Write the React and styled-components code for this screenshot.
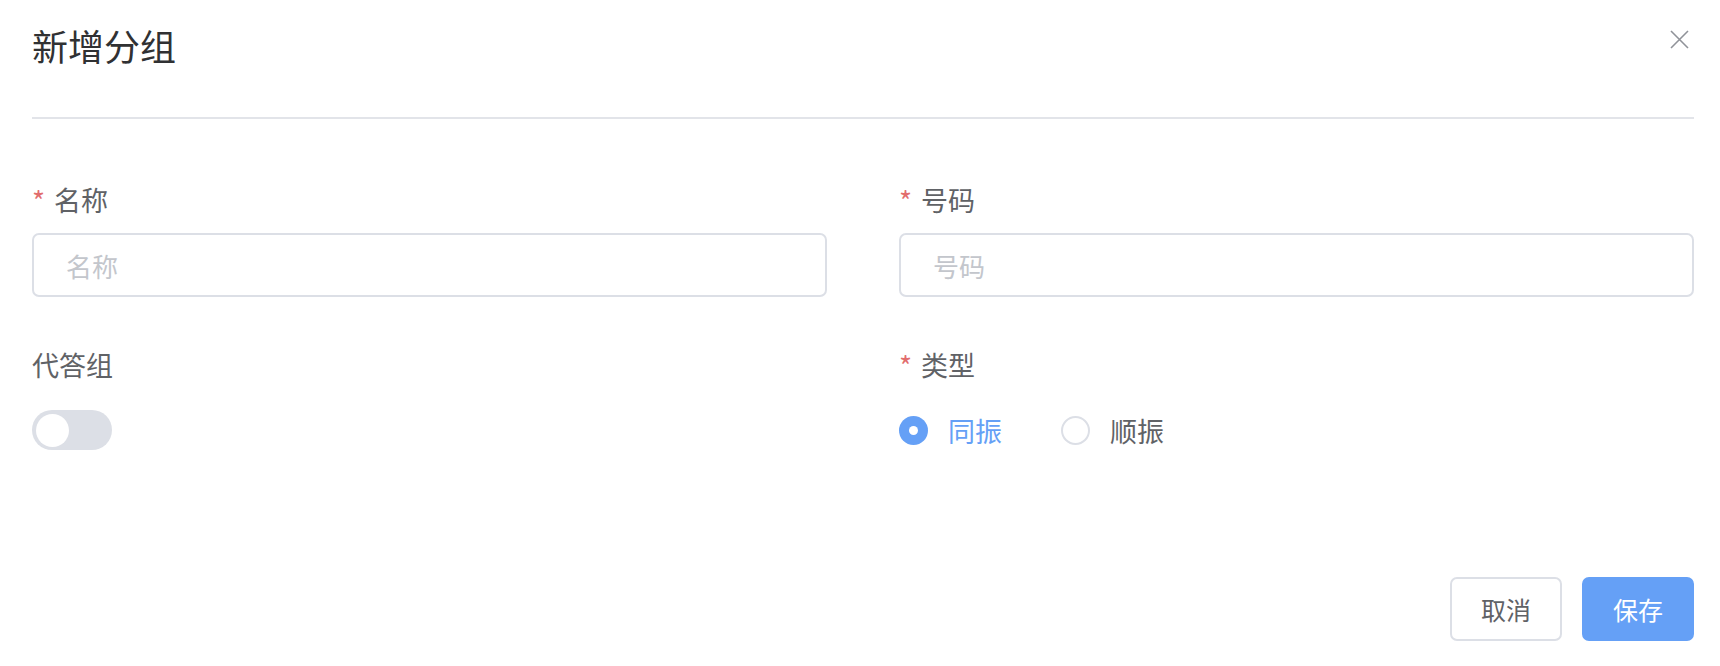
import React, { useState } from "react";
import styled, { createGlobalStyle } from "styled-components";

const GlobalStyle = createGlobalStyle`
    html, body {
        margin: 0;
        padding: 0;
        background: #ffffff;
    }
    body {
        font-family: "Noto Sans CJK SC", "Noto Sans", sans-serif;
        color: #606266;
    }
`;

const Dialog = styled.div`
    width: 1720px;
    height: 666px;
    box-sizing: border-box;
    padding: 0 26px 0 32px;
    background: #ffffff;
    display: flex;
    flex-direction: column;
`;

const Header = styled.div`
    height: 119px;
    box-sizing: border-box;
    border-bottom: 2px solid #e2e4e9;
    display: flex;
    justify-content: space-between;
    align-items: flex-start;
`;

const Titulo = styled.h1`
    margin: 25px 0 0 0;
    font-size: 36px;
    line-height: 40px;
    font-weight: 400;
    color: #303133;
`;

const Fechar = styled.button`
    margin: 29px 5px 0 0;
    padding: 0;
    width: 20px;
    height: 20px;
    border: none;
    background: transparent;
    cursor: pointer;
    display: flex;
    align-items: center;
    justify-content: center;
`;

const Formulario = styled.div`
    margin-top: 61px;
    display: grid;
    grid-template-columns: 1fr 1fr;
    column-gap: 72px;
    row-gap: 48px;
`;

const Item = styled.div`
    display: flex;
    flex-direction: column;
    gap: 13px;
`;

const Rotulo = styled.label`
    display: flex;
    align-items: center;
    height: 40px;
    font-size: 27px;
    line-height: 40px;
    color: #606266;
`;

const Asterisco = styled.span`
    color: #e26d6d;
    font-size: 28px;
    margin-right: 9px;
    position: relative;
    top: 0;
`;

const Campo = styled.div`
    height: 64px;
    display: flex;
    align-items: center;
`;

const Entrada = styled.input`
    width: 100%;
    height: 64px;
    box-sizing: border-box;
    border: 2px solid #dcdfe6;
    border-radius: 7px;
    padding: 0 32px;
    font-family: inherit;
    font-size: 26px;
    color: #606266;
    outline: none;
    &::placeholder {
        color: #c3c6cc;
    }
`;

const Chave = styled.button`
    width: 80px;
    height: 40px;
    border-radius: 20px;
    border: none;
    padding: 0 4px;
    background: ${props => (props.ligado ? "#65a0f6" : "#dcdfe6")};
    display: flex;
    align-items: center;
    justify-content: ${props => (props.ligado ? "flex-end" : "flex-start")};
    cursor: pointer;
`;

const Bolinha = styled.span`
    width: 33px;
    height: 33px;
    border-radius: 50%;
    background: #ffffff;
`;

const GrupoRadio = styled.div`
    display: flex;
    align-items: center;
    gap: 59px;
`;

const OpcaoRadio = styled.label`
    display: flex;
    align-items: center;
    gap: 20px;
    font-size: 27px;
    cursor: pointer;
    color: ${props => (props.ativo ? "#65a0f6" : "#606266")};
`;

const Circulo = styled.span`
    width: 29px;
    height: 29px;
    box-sizing: border-box;
    border-radius: 50%;
    border: ${props => (props.ativo ? "none" : "2px solid #dcdfe6")};
    background: ${props => (props.ativo ? "#65a0f6" : "#ffffff")};
    display: flex;
    align-items: center;
    justify-content: center;
    &::after {
        content: "";
        width: 9px;
        height: 9px;
        border-radius: 50%;
        background: #ffffff;
        display: ${props => (props.ativo ? "block" : "none")};
    }
`;

const Rodape = styled.div`
    margin-top: 115px;
    display: flex;
    justify-content: flex-end;
    gap: 20px;
`;

const Botao = styled.button`
    height: 64px;
    width: 112px;
    padding: 0;
    box-sizing: border-box;
    border-radius: 7px;
    font-family: inherit;
    font-size: 25px;
    cursor: pointer;
    border: 2px solid ${props => (props.primario ? "#65a0f6" : "#dcdfe6")};
    background: ${props => (props.primario ? "#65a0f6" : "#ffffff")};
    color: ${props => (props.primario ? "#ffffff" : "#606266")};
`;

function App() {
    const [tipo, setTipo] = useState("同振");
    const [ligado, setLigado] = useState(false);

    return (
        <>
            <GlobalStyle />
            <Dialog>
                <Header>
                    <Titulo>新增分组</Titulo>
                    <Fechar aria-label="关闭">
                        <svg width="19" height="19" viewBox="0 0 19 19">
                            <path d="M1 1 L18 18 M18 1 L1 18" stroke="#909399" strokeWidth="1.6" fill="none" />
                        </svg>
                    </Fechar>
                </Header>
                <Formulario>
                    <Item>
                        <Rotulo><Asterisco>*</Asterisco>名称</Rotulo>
                        <Campo><Entrada placeholder="名称" /></Campo>
                    </Item>
                    <Item>
                        <Rotulo><Asterisco>*</Asterisco>号码</Rotulo>
                        <Campo><Entrada placeholder="号码" /></Campo>
                    </Item>
                    <Item>
                        <Rotulo>代答组</Rotulo>
                        <Campo>
                            <Chave ligado={ligado} onClick={() => setLigado(!ligado)}>
                                <Bolinha />
                            </Chave>
                        </Campo>
                    </Item>
                    <Item>
                        <Rotulo><Asterisco>*</Asterisco>类型</Rotulo>
                        <Campo>
                            <GrupoRadio>
                                {["同振", "顺振"].map(op => (
                                    <OpcaoRadio key={op} ativo={tipo === op} onClick={() => setTipo(op)}>
                                        <Circulo ativo={tipo === op} />
                                        {op}
                                    </OpcaoRadio>
                                ))}
                            </GrupoRadio>
                        </Campo>
                    </Item>
                </Formulario>
                <Rodape>
                    <Botao>取消</Botao>
                    <Botao primario>保存</Botao>
                </Rodape>
            </Dialog>
        </>
    );
}

export default App;
